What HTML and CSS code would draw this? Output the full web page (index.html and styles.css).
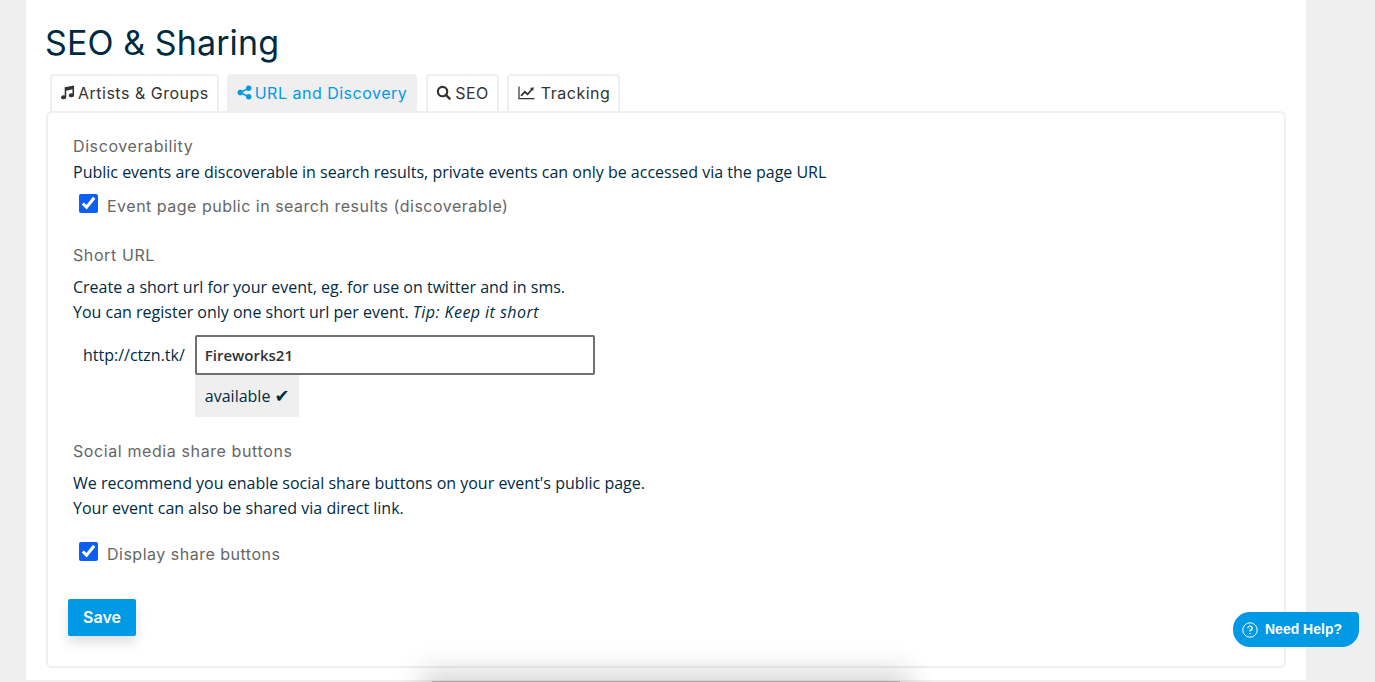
FILE: index.html
```html
<!DOCTYPE html>
<html lang="en">
<head>
<meta charset="utf-8">
<title>SEO &amp; Sharing</title>
<link rel="stylesheet" href="styles.css">
</head>
<body>
<main class="page">
  <h1 class="title">SEO &amp; Sharing</h1>
  <nav class="tabs">
    <a class="tab"><svg class="ico" viewBox="0 0 16 16"><path d="M5 2.5 15 .5V11a2.8 2.1 0 1 1-1.7-1.9V4.6L6.7 6v7a2.8 2.1 0 1 1-1.7-1.9z"/></svg>Artists &amp; Groups</a>
    <a class="tab tab-active"><svg class="ico" viewBox="0 0 16 16"><circle cx="12.5" cy="3.4" r="2.9"/><circle cx="12.5" cy="12.6" r="2.9"/><circle cx="3.6" cy="8" r="3"/><path d="M3.6 8 12.5 3.4M3.6 8l8.9 4.6" stroke="currentColor" stroke-width="1.6" fill="none"/></svg>URL and Discovery</a>
    <a class="tab"><svg class="ico ico-search" viewBox="0 0 16 16"><circle cx="7" cy="7" r="5" fill="none" stroke="currentColor" stroke-width="2.3"/><path d="m10.5 10.5 4 4" stroke="currentColor" stroke-width="2.6" stroke-linecap="round"/></svg>SEO</a>
    <a class="tab"><svg class="ico ico-wide" viewBox="0 0 18 16"><path d="M1 1.5V14.5H17.5" fill="none" stroke="currentColor" stroke-width="1.3"/><path d="m3.2 11.5 4-4.2 3 2.6 4.6-5.4" fill="none" stroke="currentColor" stroke-width="1.9"/><path d="m12.8 3.2 4-.9-.7 4z"/></svg>Tracking</a>
  </nav>
  <section class="panel">
    <div class="group group-first">
      <h2 class="label">Discoverability</h2>
      <p class="text text-tight">Public events are discoverable in search results, private events can only be accessed via the page URL</p>
      <label class="check check-first"><input type="checkbox" checked><span>Event page public in search results (discoverable)</span></label>
    </div>
    <div class="group group-url">
      <h2 class="label">Short URL</h2>
      <p class="text">Create a short url for your event, eg. for use on twitter and in sms.<br>You can register only one short url per event. <em class="tip">Tip: Keep it short</em></p>
      <div class="url-row">
        <span class="url-prefix">http://ctzn.tk/</span>
        <div class="url-field">
          <input class="url-input" type="text" value="Fireworks21">
          <div class="status">available <span class="tick">✔</span></div>
        </div>
      </div>
    </div>
    <div class="group group-social">
      <h2 class="label">Social media share buttons</h2>
      <p class="text">We recommend you enable social share buttons on your event's public page.<br>Your event can also be shared via direct link.</p>
      <label class="check check-second"><input type="checkbox" checked><span>Display share buttons</span></label>
    </div>
    <button class="save" type="button">Save</button>
  </section>
</main>
<div class="peek"></div>
<a class="help"><svg class="help-ico" viewBox="0 0 16 16"><circle cx="8" cy="8" r="7.2" fill="none" stroke="currentColor" stroke-width="1"/><path d="M5.9 6.2A2.1 2.1 0 1 1 8 8.4v1.2" fill="none" stroke="currentColor" stroke-width="1.2"/><circle cx="8" cy="11.6" r=".8"/></svg>Need Help?</a>
</body>
</html>
```

FILE: styles.css
```css
* { box-sizing: border-box; }
html, body { height: 100%; }
body {
  margin: 0;
  background: #efefef;
  overflow: hidden;
  font-family: "Open Sans", "Liberation Sans", sans-serif;
  font-size: 16px;
  color: #002b3f;
}
.page {
  width: 1280px;
  height: 680px;
  margin-left: 26px;
  padding: 23px 20px 0 19px;
  background: #fff;
}
.title {
  margin: 0 0 11px;
  font-family: Inter, "Noto Sans", sans-serif;
  font-weight: 400;
  font-size: 34px;
  line-height: 40px;
  letter-spacing: .1px;
  color: #002b3f;
}
.tabs {
  display: flex;
  gap: 8px;
  margin-left: 5px;
  height: 37px;
}
.tab {
  display: flex;
  align-items: center;
  gap: 3px;
  height: 37px;
  padding: 0 8px 2px;
  border: 2px solid #efefef;
  border-bottom: 0;
  border-radius: 4px 4px 0 0;
  font-family: Inter, "Noto Sans", sans-serif;
  font-size: 16px;
  letter-spacing: .5px;
  color: #333;
}
.tab-active {
  margin-right: 1px;
  background: #efefef;
  color: #0099e5;
}
.ico { width: 15px; height: 15px; fill: currentColor; flex: none; }
.ico-search { margin-right: 1px; }
.ico-wide { width: 19px; margin-right: 2px; }
.panel {
  height: 557px;
  margin-left: 1px;
  padding: 23px 25px 0;
  border: 2px solid #efefef;
  border-radius: 6px;
}
.group-url { margin-top: 24px; }
.group-social { margin-top: 24px; }
.label {
  margin: 0;
  font-family: Inter, "Noto Sans", sans-serif;
  font-weight: 400;
  font-size: 16px;
  line-height: 20px;
  letter-spacing: .6px;
  color: #666;
}
.text {
  margin: 10px 0 0;
  line-height: 25px;
}
.text-tight { margin-top: 4px; }
.tip { letter-spacing: .45px; }
.check {
  display: flex;
  align-items: center;
  gap: 9px;
  font-family: Inter, "Noto Sans", sans-serif;
  font-size: 16px;
  letter-spacing: .5px;
  color: #666;
}
.check input {
  width: 19px;
  height: 19px;
  margin: -6px 0 0;
  accent-color: #0d5ef4;
}
.check-first { margin: 6px 0 0 6px; height: 30px; }
.check-second { margin: 18px 0 0 6px; height: 30px; }
.url-row {
  display: flex;
  gap: 10px;
  margin: 10px 0 0 10px;
}
.url-prefix { line-height: 40px; }
.url-field { width: 400px; }
.url-input {
  display: block;
  width: 400px;
  height: 40px;
  padding: 0 8px;
  border: 2px solid #707070;
  border-radius: 2px;
  font-family: "Open Sans", sans-serif;
  font-size: 15px;
  font-weight: 600;
  color: #333;
  outline: 0;
}
.status {
  display: inline-block;
  height: 42px;
  padding: 0 9px 0 10px;
  background: #efefef;
  line-height: 42px;
}
.tick { font-family: "DejaVu Sans", sans-serif; font-size: 18px; line-height: 1; }
.save {
  display: block;
  width: 68px;
  height: 37px;
  margin: 30px 0 0 -5px;
  padding: 0 0 2px;
  border: 0;
  border-radius: 2px;
  background: #0099e5;
  color: #fff;
  font-family: Inter, "Noto Sans", sans-serif;
  font-size: 16px;
  font-weight: 600;
  box-shadow: 0 7px 12px rgba(0, 0, 0, .12);
}
.peek {
  position: fixed;
  left: 432px;
  top: 681px;
  width: 468px;
  height: 20px;
  background: #aaa;
  box-shadow: 0 0 28px 10px rgba(0, 0, 0, .16);
}
.help {
  position: fixed;
  left: 1233px;
  top: 612px;
  width: 126px;
  height: 35px;
  display: flex;
  align-items: center;
  gap: 7px;
  padding: 0 0 2px 9px;
  border-radius: 17px 4px 17px 17px;
  background: #0099e5;
  color: #fff;
  font-family: "Liberation Sans", Arial, sans-serif;
  font-weight: 700;
  font-size: 14px;
}
.help-ico { width: 16px; height: 16px; margin-top: 2px; fill: currentColor; flex: none; }
```
